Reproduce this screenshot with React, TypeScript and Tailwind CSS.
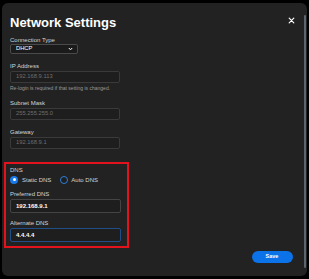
import React from "react";

const font = { fontFamily: '"Liberation Sans", Arial, sans-serif' };

function Label({ children, className = "" }: { children: React.ReactNode; className?: string }) {
  return <div className={`text-[6px] leading-[7px] h-[7px] text-[#d4d4d4] whitespace-nowrap ${className}`}>{children}</div>;
}

function Input({ value, className = "", strong = false, h = "h-[12px]", border = "border-[#3a3a3a]" }: { value: string; className?: string; strong?: boolean; h?: string; border?: string }) {
  return (
    <div className={`w-[110px] ${h} rounded-[2px] border ${border} bg-[#1e1e1e] flex items-center pl-[5px] ${className}`}>
      <span className={`leading-none ${strong ? "text-[6px] text-white font-bold" : "text-[5.8px] text-[#6f6f6f]"}`}>{value}</span>
    </div>
  );
}

export default function App() {
  return (
    <div style={font} className="w-[309px] h-[279px] bg-black pt-[3px] pl-[2px] pr-[2px] pb-[3px]">
      <div className="h-full w-full bg-[#222222] rounded-[6px] flex flex-row">
        <div className="flex-1 flex flex-col pl-[8px] pr-[8px]">
          <div className="flex flex-row items-start mt-[13px]">
            <div className="flex-1 text-[13px] leading-[13px] h-[13px] font-bold text-white whitespace-nowrap">Network Settings</div>
            <svg width="7" height="7" viewBox="0 0 7 7" className="mt-[1px] mr-[1px]">
              <path d="M1.2 1.2 L5.8 5.8 M5.8 1.2 L1.2 5.8" stroke="#ffffff" strokeWidth="1.2" strokeLinecap="round" />
            </svg>
          </div>

          <Label className="mt-[7.5px]">Connection Type</Label>
          <div className="mt-[0.5px] w-[68px] h-[10px] rounded-[2px] border border-[#4a4a4a] bg-[#1b1b1b] flex items-center pl-[5px] pr-[4px]">
            <span className="flex-1 text-[5.8px] leading-none text-white">DHCP</span>
            <svg width="5" height="4" viewBox="0 0 5 4">
              <path d="M0.8 1 L2.5 2.8 L4.2 1" stroke="#ffffff" strokeWidth="1" fill="none" />
            </svg>
          </div>

          <Label className="mt-[8.5px]">IP Address</Label>
          <Input value="192.168.9.113" className="mt-[1.5px]" />
          <div className="mt-[1.5px] text-[5px] leading-[7px] h-[7px] text-[#9a9a9a] whitespace-nowrap">Re-login is required if that setting is changed.</div>

          <Label className="mt-[8px]">Subnet Mask</Label>
          <Input value="255.255.255.0" className="mt-[1.5px]" />

          <Label className="mt-[8.5px]">Gateway</Label>
          <Input value="192.168.9.1" className="mt-[1.5px]" />

          <div className="mt-[13px] -ml-[6px] w-[125px] border-2 border-[#e3131d] pl-[4px] pt-[2.5px] pb-[4px]">
            <Label>DNS</Label>
            <div className="mt-[2px] h-[8px] flex flex-row items-center">
              <div className="w-[8px] h-[8px] rounded-full bg-[#1a7ae8] flex items-center justify-center">
                <div className="w-[3px] h-[3px] rounded-full bg-white" />
              </div>
              <span className="ml-[4px] text-[6px] leading-none text-[#d4d4d4]">Static DNS</span>
              <div className="ml-[9px] w-[8px] h-[8px] rounded-full border border-[#2f7fd9] bg-[#1e1e1e]" />
              <span className="ml-[3px] text-[6px] leading-none text-[#d4d4d4]">Auto DNS</span>
            </div>
            <Label className="mt-[7px]">Preferred DNS</Label>
            <Input value="192.168.9.1" strong h="h-[14px]" border="border-[#444444]" className="mt-[1.5px] w-[111px]" />
            <Label className="mt-[6.5px]">Alternate DNS</Label>
            <Input value="4.4.4.4" strong h="h-[14px]" border="border-[#1f4f86]" className="mt-[1.5px] w-[111px]" />
          </div>

          <div className="mt-[3px] flex flex-row justify-end pr-[3px]">
            <div className="w-[41px] h-[12px] rounded-full bg-[#0b72e7] flex items-center justify-center">
              <span className="text-[5.5px] leading-none font-bold text-white">Save</span>
            </div>
          </div>
        </div>
        <div className="w-[2.5px] mt-[12px] mb-[8px] mr-[1px] rounded-full bg-[#5d6670]" />
      </div>
    </div>
  );
}
